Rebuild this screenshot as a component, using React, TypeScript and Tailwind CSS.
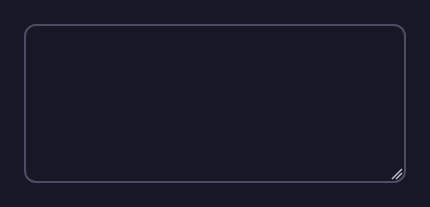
export default function App() {
  return (
    <main className="min-h-screen bg-[#171728] p-6">
      <div className="relative">
        <textarea className="block w-full h-[159px] resize-none rounded-xl border-2 border-[#4d4b67] bg-[#171728] p-3 font-['Inter',sans-serif] text-white outline-none" />
        {/* resize grip */}
        <svg
          className="pointer-events-none absolute right-[3px] bottom-[3px]"
          width="12"
          height="12"
          viewBox="0 0 12 12"
        >
          <path d="M1 11 L11 1 M5 11 L11 5" stroke="#b8b8c4" strokeWidth="1.6" />
        </svg>
      </div>
    </main>
  );
}
